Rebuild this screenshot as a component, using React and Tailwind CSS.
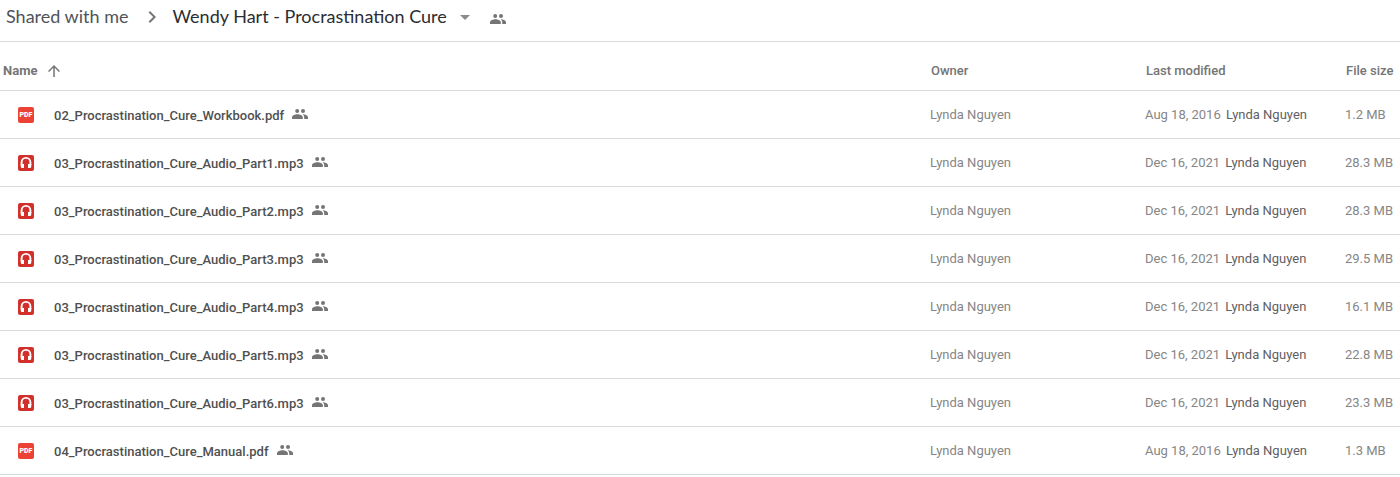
import { MdArrowDropDown, MdArrowUpward, MdChevronRight } from 'react-icons/md'

const files = [
  { name: '02_Procrastination_Cure_Workbook.pdf', type: 'pdf', modified: 'Aug 18, 2016', size: '1.2 MB' },
  { name: '03_Procrastination_Cure_Audio_Part1.mp3', type: 'audio', modified: 'Dec 16, 2021', size: '28.3 MB' },
  { name: '03_Procrastination_Cure_Audio_Part2.mp3', type: 'audio', modified: 'Dec 16, 2021', size: '28.3 MB' },
  { name: '03_Procrastination_Cure_Audio_Part3.mp3', type: 'audio', modified: 'Dec 16, 2021', size: '29.5 MB' },
  { name: '03_Procrastination_Cure_Audio_Part4.mp3', type: 'audio', modified: 'Dec 16, 2021', size: '16.1 MB' },
  { name: '03_Procrastination_Cure_Audio_Part5.mp3', type: 'audio', modified: 'Dec 16, 2021', size: '22.8 MB' },
  { name: '03_Procrastination_Cure_Audio_Part6.mp3', type: 'audio', modified: 'Dec 16, 2021', size: '23.3 MB' },
  { name: '04_Procrastination_Cure_Manual.pdf', type: 'pdf', modified: 'Aug 18, 2016', size: '1.3 MB' },
]

const owner = 'Lynda Nguyen'

function PeopleIcon({ className }) {
  return (
    <svg viewBox="0 0 16 10" className={`h-[10px] w-4 shrink-0 ${className || ''}`} fill="#757575" aria-hidden="true">
      <circle cx="5.2" cy="2.1" r="2" />
      <circle cx="11" cy="2.1" r="2" />
      <path d="M5.4 5.3c-2.2 0-5.4 1-5.4 3V10h10.8V8.3c0-2-3.2-3-5.4-3z" />
      <path d="M10.6 5.3c1 .8 1.6 1.8 1.6 3V10H16V8.3c0-2-3.2-3-5.4-3z" />
    </svg>
  )
}

function FileIcon({ type }) {
  if (type === 'pdf') {
    return (
      <span className="flex h-4 w-4 shrink-0 items-center justify-center rounded-xs bg-[#ea4335] text-[7px] leading-none font-black text-white">
        PDF
      </span>
    )
  }
  return (
    <svg viewBox="0 0 16 16" className="h-4 w-4 shrink-0" aria-hidden="true">
      <rect width="16" height="16" rx="2" fill="#d2302a" />
      <path d="M3.6 10V7.3a4.4 4.4 0 0 1 8.8 0V10" fill="none" stroke="#fff" strokeWidth="1.9" />
      <path d="M2.7 8.9H6v4.2H4.2a1.5 1.5 0 0 1-1.5-1.5zM10 8.9h3.3v2.7a1.5 1.5 0 0 1-1.5 1.5H10z" fill="#fff" />
    </svg>
  )
}

function FileRow({ file }) {
  return (
    <tr className="h-12 border-b border-[#dadada]">
      <td className="pt-[2px]">
        <div className="flex items-center pl-[18px]">
          <FileIcon type={file.type} />
          <a href="#" className="mt-px ml-5 font-medium text-[#505050]">{file.name}</a>
          <PeopleIcon className="mb-[3px] ml-2" />
        </div>
      </td>
      <td className="pt-[2px]">{owner}</td>
      <td className="pt-[2px]">
        {file.modified} <span className="ml-[2px] text-[#5f6062]">{owner}</span>
      </td>
      <td className="pt-[2px]">{file.size}</td>
    </tr>
  )
}

export default function App() {
  return (
    <main className="bg-white font-['Roboto',sans-serif] text-[13px] leading-4 text-[#868686]">
      {/* Breadcrumb */}
      <nav className="flex items-center border-b border-[#dadada] pb-2 pl-[6px] font-['Lato',sans-serif] text-[18px] leading-[33px]">
        <a href="#" className="text-[#50535a]">Shared with me</a>
        <MdChevronRight className="mr-2 ml-3 h-6 w-6 text-[#757575]" />
        <button className="flex items-center text-[#2b2d33]">
          Wendy Hart - Procrastination Cure
          <MdArrowDropDown className="ml-[6px] h-6 w-6 text-[#8a8a8a]" />
        </button>
        <button aria-label="Manage people" className="ml-[13px] pt-1">
          <PeopleIcon />
        </button>
      </nav>

      <table className="w-full table-fixed border-collapse text-left whitespace-nowrap">
        <colgroup>
          <col />
          <col className="w-[215px]" />
          <col className="w-[200px]" />
          <col className="w-[55px]" />
        </colgroup>
        <thead>
          <tr className="h-12 border-b border-[#dadada] text-[#757575]">
            <th className="pt-[10px] font-bold">
              <button className="flex items-center gap-2 pl-[3px]">
                Name
                <MdArrowUpward className="h-[18px] w-[18px]" />
              </button>
            </th>
            <th className="pt-[10px] pl-px font-medium">Owner</th>
            <th className="pt-[10px] pl-px font-medium">Last modified</th>
            <th className="pt-[10px] pl-px font-medium">File size</th>
          </tr>
        </thead>
        <tbody>
          {files.map((file) => (
            <FileRow key={file.name} file={file} />
          ))}
        </tbody>
      </table>
    </main>
  )
}
